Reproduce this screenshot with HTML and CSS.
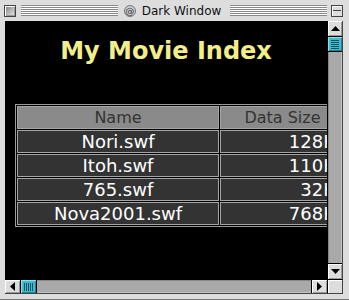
FILE: index.html
```html
<!DOCTYPE html>
<html lang="en">
<head>
  <meta charset="UTF-8" />
  <title>Dark Window</title>
  <link rel="stylesheet" href="styles.css">
</head>
<body>

<div class="window">
  <div class="titlebar">
    <span class="close-box"></span>
    <span class="stripes"></span>
    <span class="title"><span class="title-icon">@</span>Dark Window</span>
    <span class="stripes"></span>
    <span class="zoom-box"></span>
  </div>

  <div class="frame">
    <div class="viewport">
      <div class="page">
        <h1>My Movie Index</h1>
        <table class="movies">
          <colgroup>
            <col class="col-name">
            <col class="col-size">
          </colgroup>
          <tr>
            <th>Name</th>
            <th>Data Size</th>
          </tr>
          <tr><td>Nori.swf</td><td class="size">128K</td></tr>
          <tr><td>Itoh.swf</td><td class="size">110K</td></tr>
          <tr><td>765.swf</td><td class="size">32K</td></tr>
          <tr><td>Nova2001.swf</td><td class="size">768K</td></tr>
        </table>
      </div>
    </div>

    <!-- vertical scroll bar -->
    <div class="vscroll">
      <div class="arrow-btn up">
        <svg width="9" height="5" viewBox="0 0 9 5"><polygon points="4.5,0 9,5 0,5" fill="#000"/></svg>
      </div>
      <div class="thumb v"><span class="grip"></span></div>
      <div class="track"></div>
      <div class="arrow-btn down">
        <svg width="9" height="5" viewBox="0 0 9 5"><polygon points="0,0 9,0 4.5,5" fill="#000"/></svg>
      </div>
    </div>

    <!-- horizontal scroll bar -->
    <div class="hscroll">
      <div class="arrow-btn left">
        <svg width="5" height="9" viewBox="0 0 5 9"><polygon points="5,0 5,9 0,4.5" fill="#000"/></svg>
      </div>
      <div class="thumb h"><span class="grip"></span></div>
      <div class="track"></div>
      <div class="arrow-btn right">
        <svg width="5" height="9" viewBox="0 0 5 9"><polygon points="0,0 5,4.5 0,9" fill="#000"/></svg>
      </div>
    </div>

    <div class="grow-box"></div>
  </div>
</div>

</body>
</html>
```

FILE: styles.css
```css
body {
  margin: 0;
  background-color: #dddddd;
  font-family: 'DejaVu Sans', sans-serif;
}

.window {
  width: 349px;
  height: 300px;
  display: flex;
  flex-direction: column;
  background-color: #dddddd;
  overflow: hidden;
}

/* title bar */

.titlebar {
  height: 21px;
  box-sizing: border-box;
  display: flex;
  align-items: center;
  padding: 0 6px 0 4px;
}

.close-box {
  width: 12px;
  height: 12px;
  box-sizing: border-box;
  border: 1px solid #444;
  background: linear-gradient(135deg, #777 0%, #bbb 55%, #eee 100%);
  box-shadow: inset 1px 1px 0 #fff, inset -1px -1px 0 #999;
}

.stripes {
  flex: 1;
  height: 11px;
  margin-left: 5px;
  background: repeating-linear-gradient(to bottom, #888 0 1px, #fff 1px 2px);
}

.stripes + .zoom-box {
  margin-left: 4px;
}

.title {
  display: flex;
  align-items: center;
  padding: 0 4px 0 6px;
  font-size: 12px;
  color: #111;
  white-space: nowrap;
}

.title-icon {
  width: 12px;
  height: 12px;
  box-sizing: border-box;
  margin-right: 6px;
  border: 1px solid #777;
  border-radius: 50%;
  background: #ccc;
  font-size: 9px;
  line-height: 10px;
  text-align: center;
  color: #333;
}

.zoom-box {
  position: relative;
  width: 12px;
  height: 12px;
  box-sizing: border-box;
  border: 1px solid #444;
  background: #ddd;
  box-shadow: inset 1px 1px 0 #fff;
}

.zoom-box::after {
  content: '';
  position: absolute;
  left: 1px;
  right: 1px;
  top: 1px;
  height: 3px;
  border-bottom: 1px solid #444;
}

/* frame and panes */

.frame {
  flex: 1;
  display: grid;
  grid-template-columns: 322px 16px;
  grid-template-rows: 258px 15px;
  padding: 0 6px 6px 5px;
  box-shadow: inset 0 -3px 0 -2px #777;
}

.viewport {
  background-color: #000;
  overflow: hidden;
}

.page {
  padding: 0 10px;
}

.page h1 {
  margin: 16px 0 39px;
  font-size: 24px;
  line-height: 28px;
  text-align: center;
  color: #f2ee8a;
}

.movies {
  table-layout: fixed;
  width: 332px;
  border: 1px solid #9a9a9a;
  border-spacing: 1px;
  font-size: 16px;
}

.col-name {
  width: 202px;
}

.movies th,
.movies td {
  height: 23px;
  box-sizing: border-box;
  padding: 0 6px;
  border: 1px solid #a4a4a4;
  text-align: center;
  white-space: nowrap;
  overflow: hidden;
}

.movies th {
  background-color: #8a8a8a;
  color: #333;
  font-weight: normal;
}

.movies td {
  background-color: #333;
  color: #fff;
  font-size: 18px;
}

.movies td.size {
  padding-right: 9px;
  text-align: right;
}

/* scroll bars */

.vscroll {
  display: flex;
  flex-direction: column;
  border-left: 1px solid #000;
  border-right: 1px solid #444;
}

.hscroll {
  display: flex;
  border-top: 1px solid #000;
  border-bottom: 1px solid #444;
}

.arrow-btn {
  display: flex;
  align-items: center;
  justify-content: center;
  background-color: #dddddd;
  box-shadow: inset 1px 1px 0 #fff, inset -1px -1px 0 #999;
}

.vscroll .arrow-btn {
  height: 15px;
}

.arrow-btn.up {
  border-bottom: 1px solid #000;
}

.arrow-btn.down {
  border-top: 1px solid #000;
}

.hscroll .arrow-btn {
  width: 15px;
}

.arrow-btn.left {
  border-right: 1px solid #000;
}

.arrow-btn.right {
  border-left: 1px solid #000;
}

.thumb {
  display: flex;
  align-items: center;
  justify-content: center;
  background-color: #3cbccf;
  box-shadow: inset 1px 1px 0 #8fe0ec, inset -1px -1px 0 #1f8294;
}

.thumb.v {
  height: 14px;
  border-bottom: 1px solid #000;
}

.thumb.h {
  width: 15px;
  border-right: 1px solid #000;
}

.thumb.v .grip {
  width: 8px;
  height: 9px;
  background: repeating-linear-gradient(to bottom, #124f5c 0 1px, transparent 1px 2px);
}

.thumb.h .grip {
  width: 9px;
  height: 8px;
  background: repeating-linear-gradient(to right, #124f5c 0 1px, transparent 1px 2px);
}

.track {
  flex: 1;
  background-color: #a9a9a9;
}

.vscroll .track {
  box-shadow: inset 1px 0 0 #888, inset -1px 0 0 #c4c4c4;
}

.hscroll .track {
  box-shadow: inset 0 1px 0 #888, inset 0 -1px 0 #c4c4c4;
}

.grow-box {
  background-color: #dddddd;
  border-top: 1px solid #000;
  border-left: 1px solid #000;
  border-right: 1px solid #444;
  border-bottom: 1px solid #444;
  box-shadow: inset 1px 1px 0 #fff;
}
```
